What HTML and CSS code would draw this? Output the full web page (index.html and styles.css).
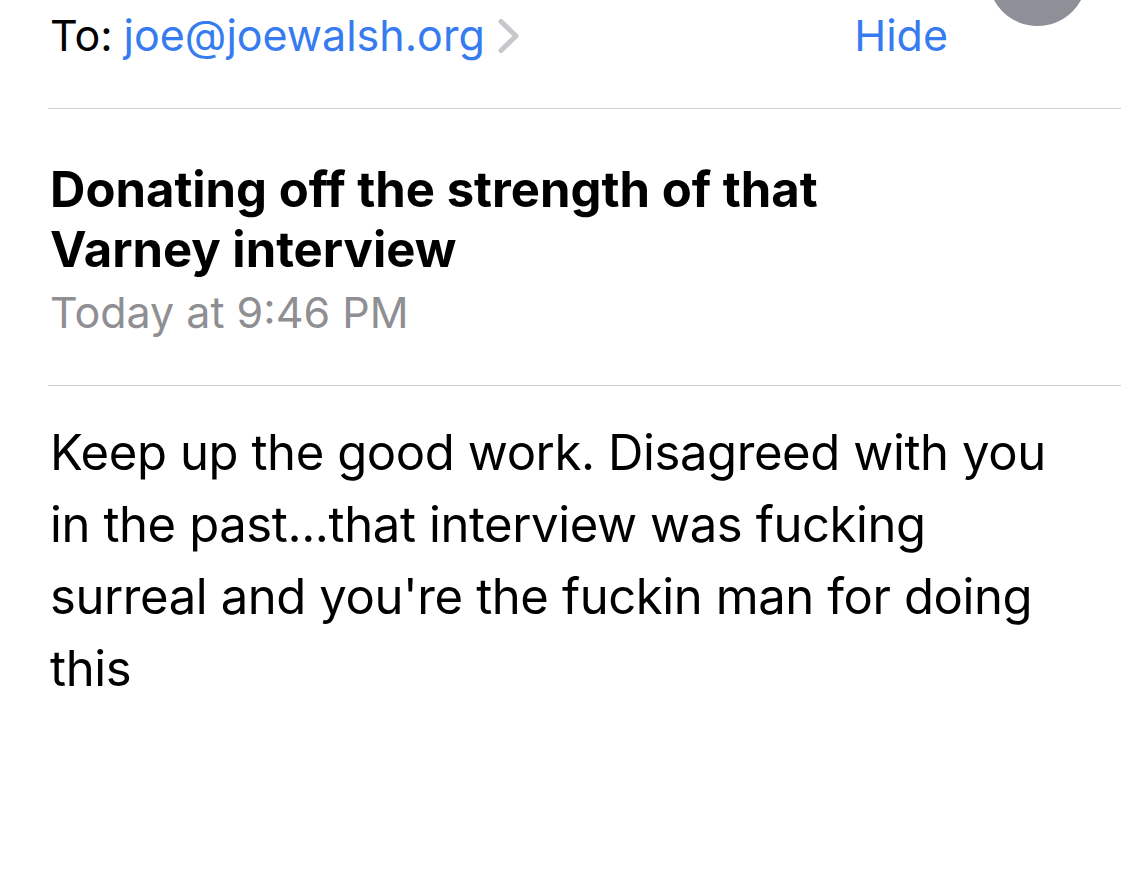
FILE: index.html
```html
<!DOCTYPE html>
<html lang="en">
<head>
<meta charset="utf-8">
<title>Mail</title>
<link rel="stylesheet" href="styles.css">
</head>
<body>
<div class="screen">
  <div class="avatar"></div>
  <header class="to-row">
    <div class="to">
      <span class="to-label">To:</span>
      <span class="to-addr">joe@joewalsh.org</span>
      <svg class="chevron" width="24" height="36" viewBox="0 0 24 36" aria-hidden="true">
        <path d="M4 3.5 L19 18 L4 32.5" fill="none" stroke="#c7c7cc" stroke-width="5" stroke-linecap="round" stroke-linejoin="round"/>
      </svg>
    </div>
    <span class="hide">Hide</span>
  </header>
  <div class="rule"></div>
  <section class="subject-block">
    <h1 class="subject">Donating off the strength of that Varney interview</h1>
    <div class="date">Today at 9:46 PM</div>
  </section>
  <div class="rule"></div>
  <main class="message">
    Keep up the good work. Disagreed with you in the past...that interview was fucking surreal and you're the fuckin man for doing this
  </main>
</div>
</body>
</html>
```

FILE: styles.css
```css
html, body {
  margin: 0;
  padding: 0;
  background: #ffffff;
}

body {
  font-family: Inter, "Liberation Sans", Arial, sans-serif;
  color: #000000;
  -webkit-font-smoothing: antialiased;
}

.screen {
  position: relative;
  width: 1121px;
  height: 872px;
  overflow: hidden;
}

.avatar {
  position: absolute;
  left: 988px;
  top: -73px;
  width: 99px;
  height: 99px;
  border-radius: 50%;
  background: #8e9097;
}

.to-row {
  box-sizing: border-box;
  height: 108px;
  padding: 5px 173px 0 50px;
  display: flex;
  align-items: flex-start;
  justify-content: space-between;
  font-size: 43px;
  line-height: 60px;
}

.to {
  display: flex;
  align-items: center;
  white-space: nowrap;
}

.to-label {
  color: #000000;
  margin-right: 11px;
}

.to-addr {
  color: #367cf0;
}

.chevron {
  margin-left: 12px;
  margin-top: 2px;
}

.hide {
  color: #367cf0;
}

.rule {
  margin-left: 48px;
  height: 1px;
  background: #cfcfd2;
}

.subject-block {
  padding: 51px 50px 43px 50px;
}

.subject {
  margin: 0;
  max-width: 900px;
  font-size: 49px;
  font-weight: 700;
  line-height: 60px;
}

.date {
  margin-top: 2px;
  font-size: 43px;
  line-height: 60px;
  color: #8e8e93;
}

.message {
  display: block;
  padding: 31px 50px 0 50px;
  font-size: 49px;
  letter-spacing: -0.4px;
  line-height: 72px;
}
```
